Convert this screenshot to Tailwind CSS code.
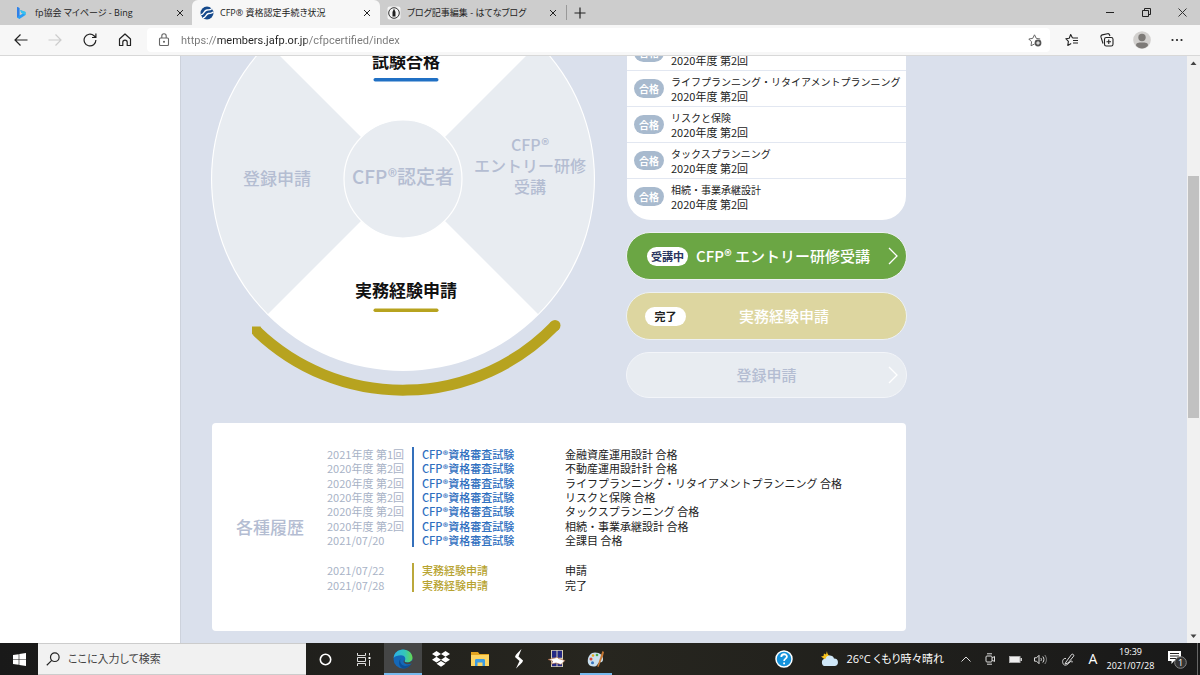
<!DOCTYPE html>
<html lang="ja">
<head>
    <meta charset="UTF-8">
    <meta name="viewport" content="width=device-width, initial-scale=1.0">
    <title>CFP® 資格認定手続き状況</title>
    <script src="https://cdn.jsdelivr.net/npm/@tailwindcss/browser@4"></script>
</head>
<body class="h-screen flex flex-col overflow-hidden bg-white text-[#222] font-['Noto_Sans_CJK_JP','Noto_Sans',sans-serif]">
    <!-- タブバー -->
    <header class="h-[25px] shrink-0 flex bg-[#cdcdcd] text-[9px] text-[#222] [font-feature-settings:'palt'] font-['Open_Sans','Noto_Sans_CJK_JP',sans-serif]">
        <div class="w-[192px] flex items-center pl-[15px] pr-2">
            <svg class="w-3 h-3 shrink-0" viewBox="0 0 12 12"><path d="M2 0l2.400 .9v7.600L8 6.500 6.300 5.700 5.200 3.100 10.500 5v2.900L4.400 12 2 10.600z" fill="#2a9df4"/><path d="M2 0l2.400 .9v7.600L2 10.600z" fill="#2f7fe8"/><path d="M5.200 3.100L10.500 5v2.900L6.300 5.700z" fill="#33c4ee"/></svg>
            <span class="ml-2 flex-1 whitespace-nowrap">fp協会 マイページ - Bing</span>
            <button aria-label="閉じる"><svg class="w-2 h-2" viewBox="0 0 8 8" stroke="#222"><path d="M1 1l6 6M7 1L1 7"/></svg></button>
        </div>
        <div class="w-[188px] flex items-center pl-2 pr-[9px] bg-[#f7f7f7] rounded-t-md">
            <svg class="w-[14px] h-[14px] shrink-0" viewBox="0 0 14 14"><circle cx="7" cy="7" r="6.500" fill="#164a8c"/><path d="M1 8.500C4 9 3.500 4.500 7 4c2-.3 3 .3 5-1.500M3 11.800c3 0 2.500-3.600 5.500-4.300 2-.5 3 .3 4.800-1.500" fill="none" stroke="#fff" stroke-width="1.300"/></svg>
            <span class="ml-[6px] flex-1 whitespace-nowrap">CFP® 資格認定手続き状況</span>
            <button aria-label="閉じる"><svg class="w-2 h-2" viewBox="0 0 8 8" stroke="#222"><path d="M1 1l6 6M7 1L1 7"/></svg></button>
        </div>
        <div class="w-[187px] my-[5px] flex items-center pl-[7px] pr-[9px] border-r border-[#999]">
            <svg class="w-[14px] h-[14px] shrink-0" viewBox="0 0 14 14"><rect x=".5" y=".5" width="13" height="13" rx="2" fill="#f5f5f5"/><circle cx="7" cy="7" r="5.300" fill="none" stroke="#333"/><path d="M7 2.500L8.500 6v4.500h-3V6z" fill="#222"/></svg>
            <span class="ml-[6px] flex-1 whitespace-nowrap">ブログ記事編集 - はてなブログ</span>
            <button aria-label="閉じる"><svg class="w-2 h-2" viewBox="0 0 8 8" stroke="#222"><path d="M1 1l6 6M7 1L1 7"/></svg></button>
        </div>
        <button class="w-[26px] flex items-center justify-center" aria-label="新しいタブ"><svg class="w-3 h-3" viewBox="0 0 12 12" stroke="#222" stroke-width="1.200"><path d="M6 .5v11M.5 6h11"/></svg></button>
        <div class="ml-auto flex">
            <button class="w-9 flex items-center justify-center" aria-label="最小化"><svg class="w-2 h-2" viewBox="0 0 8 8" stroke="#222"><path d="M0 3.500h8"/></svg></button>
            <button class="w-9 flex items-center justify-center" aria-label="元に戻す"><svg class="w-[9px] h-[9px]" viewBox="0 0 9 9" fill="none" stroke="#222"><path d="M.5 2.500h6v6h-6zM2.500 2.500v-2h6v6h-2"/></svg></button>
            <button class="w-9 flex items-center justify-center" aria-label="閉じる"><svg class="w-[9px] h-[9px]" viewBox="0 0 9 9" stroke="#333"><path d="M.5 .5l8 8M8.500 .5l-8 8"/></svg></button>
        </div>
    </header>

    <!-- ツールバー -->
    <nav class="h-[31px] shrink-0 flex items-center pl-1 pr-[6px] bg-[#f7f7f7] border-b border-[#d8d8d8]">
        <button class="w-[34px] flex justify-center" aria-label="戻る"><svg class="w-[14px] h-[14px]" viewBox="0 0 14 14" fill="none" stroke="#222" stroke-width="1.200"><path d="M13.500 7H1M6.500 1.500L1 7l5.500 5.500"/></svg></button>
        <button class="w-[34px] flex justify-center" aria-label="進む"><svg class="w-[14px] h-[14px]" viewBox="0 0 14 14" fill="none" stroke="#ccc" stroke-width="1.200"><path d="M.5 7H13M7.500 1.500L13 7l-5.500 5.500"/></svg></button>
        <button class="w-[35px] flex justify-center" aria-label="更新"><svg class="w-[14px] h-[14px]" viewBox="0 0 14 14" fill="none" stroke="#222" stroke-width="1.200"><path d="M12.900 7A5.900 5.900 0 1 1 11 2.700l1.700 1.600M12.900 .5v4H9"/></svg></button>
        <button class="w-[35px] flex justify-center" aria-label="ホーム"><svg class="w-[14px] h-[14px]" viewBox="0 0 14 14" fill="none" stroke="#222" stroke-width="1.200" stroke-linejoin="round"><path d="M1.500 6L7 1l5.500 5v6.500h-3.300V9.300a2.200 2.200 0 0 0-4.400 0v3.200H1.500z"/></svg></button>
        <div class="h-6 flex-1 ml-[5px] mr-1 flex items-center bg-white rounded pl-[11px] pr-2">
            <svg class="w-3 h-[14px] shrink-0" viewBox="0 0 12 14" fill="none" stroke="#666" stroke-width="1.100"><rect x="1.500" y="5" width="9" height="7.500" rx="1"/><path d="M3.800 5V3a2.200 2.200 0 0 1 4.400 0v2"/><circle cx="6" cy="8.700" r=".5" fill="#666"/></svg>
            <input type="text" aria-label="アドレスバー" value="https://members.jafp.or.jp/cfpcertified/index" class="ml-[11px] flex-1 h-5 text-[11px] outline-none text-transparent bg-clip-text bg-[linear-gradient(90deg,#777_36px,#222_36px,#222_125px,#777_125px)] font-[Roboto,sans-serif]">
            <button aria-label="お気に入りに追加"><svg class="w-[14px] h-[14px]" viewBox="0 0 14 14" fill="none" stroke="#666" stroke-linejoin="round"><path d="M6.500 11L3 12.800l.6-4L.8 6l3.900-.6L6.500 1.800l1.800 3.600 3.900.6"/><circle cx="10" cy="10" r="3.400" fill="#555" stroke="none"/><path d="M10 8.200v3.600M8.200 10h3.600" stroke="#fff"/></svg></button>
        </div>
        <button class="w-[35px] flex justify-center" aria-label="お気に入り"><svg class="w-[14px] h-[14px]" viewBox="0 0 14 14" fill="none" stroke="#222" stroke-width="1.100" stroke-linejoin="round"><path d="M7.500 5L5.700 1.500 4.200 5.200.8 5.700l2.600 2.700-.6 4 3.400-1.900M7.500 5H13M8 7.500h5M8 10h5"/></svg></button>
        <button class="w-[35px] flex justify-center" aria-label="コレクション"><svg class="w-[14px] h-[14px]" viewBox="0 0 14 14" fill="none" stroke="#222" stroke-width="1.100"><rect x="4.500" y="4.500" width="8.500" height="8.500" rx="1.800"/><path d="M8.750 6.500v4.500M6.500 8.750H11M3 10.500L1 4.200C.7 3 1.200 2.200 2.200 1.900L7.500 .7c1-.2 1.800.3 2.100 1.300l.3 1"/></svg></button>
        <button class="w-[35px] flex justify-center" aria-label="プロファイル"><svg class="w-[18px] h-[18px]" viewBox="0 0 18 18"><circle cx="9" cy="9" r="8.800" fill="#d2d0ce"/><circle cx="9" cy="6.500" r="3.700" fill="#7d7a77"/><path d="M3 14.500c0-3 2.500-3 6-3s6 0 6 3c-1.500 2-3.800 3-6 3s-4.500-1-6-3z" fill="#7d7a77"/></svg></button>
        <button class="w-[35px] flex justify-center" aria-label="設定など"><svg class="w-3 h-3" viewBox="0 0 12 12" fill="#222"><circle cx="1.500" cy="6" r="1.100"/><circle cx="6" cy="6" r="1.100"/><circle cx="10.500" cy="6" r="1.100"/></svg></button>
    </nav>

    <!-- ページ本体 -->
    <div class="flex-1 min-h-0 flex">
        <div class="w-[181px] shrink-0 bg-white border-r border-[#cdd2dc]"></div>
        <main class="flex-1 min-w-0 overflow-hidden bg-[#dae0ec] pl-[31px]">
            <div class="max-w-[694px] -mt-[21px]">
                <div class="flex justify-between items-start -mx-px">
                    <!-- 手続きの円グラフ -->
                    <svg class="w-[386px] h-[363px] shrink-0" viewBox="211 35 386 363" text-anchor="middle" font-weight="500">
                        <circle cx="403" cy="179" r="192" fill="#fff"/>
                        <path d="M403 179L268 44A191 191 0 0 0 268 314zM403 179L538 44A191 191 0 0 1 538 314z" fill="#e8ecf1"/>
                        <circle cx="403" cy="179" r="59" fill="#e8ecf1" stroke="#fff" stroke-width="1.200"/>
                        <path d="M257 331.500A211 211 0 0 0 555 325.500" fill="none" stroke="#b7a31f" stroke-width="11"/>
                        <path d="M252 326.500h8.500l2 4.500-6 6-4.500-3z" fill="#b7a31f"/>
                        <circle cx="555" cy="325.500" r="5.500" fill="#b7a31f"/>
                        <rect x="373.500" y="78" width="65" height="3.500" rx="1.700" fill="#2070c4"/>
                        <rect x="373.500" y="308.500" width="65" height="3.500" rx="1.700" fill="#b7a31f"/>
                        <text x="406" y="68" font-size="17" font-weight="700" fill="#111">試験合格</text>
                        <text x="406" y="297" font-size="17" font-weight="700" fill="#111">実務経験申請</text>
                        <g fill="#b4bdd2">
                            <text x="277" y="185" font-size="17">登録申請</text>
                            <text x="403" y="184" font-size="19">CFP®認定者</text>
                            <text font-size="16"><tspan x="530" y="151">CFP®</tspan><tspan x="530" y="172">エントリー研修</tspan><tspan x="530" y="193">受講</tspan></text>
                        </g>
                    </svg>

                    <!-- 合格科目と申請ボタン -->
                    <div class="w-[281px] shrink-0 flex flex-col gap-3">
                        <ul class="mx-px pb-[7px] bg-white rounded-b-[24px] divide-y divide-[#e2e7f1] text-[11px] leading-[14px]">
                            <li class="h-9 flex items-center pl-[7px] gap-[7px]"><span class="w-[30px] h-[19px] rounded-full bg-[#a8bace] text-white text-[10px] leading-[19px] font-bold text-center">合格</span><p><span class="text-[10px]">不動産運用設計</span><br>2020年度 第2回</p></li>
                            <li class="h-9 flex items-center pl-[7px] gap-[7px]"><span class="w-[30px] h-[19px] rounded-full bg-[#a8bace] text-white text-[10px] leading-[19px] font-bold text-center">合格</span><p><span class="text-[10px]">ライフプランニング・リタイアメントプランニング</span><br>2020年度 第2回</p></li>
                            <li class="h-9 flex items-center pl-[7px] gap-[7px]"><span class="w-[30px] h-[19px] rounded-full bg-[#a8bace] text-white text-[10px] leading-[19px] font-bold text-center">合格</span><p><span class="text-[10px]">リスクと保険</span><br>2020年度 第2回</p></li>
                            <li class="h-9 flex items-center pl-[7px] gap-[7px]"><span class="w-[30px] h-[19px] rounded-full bg-[#a8bace] text-white text-[10px] leading-[19px] font-bold text-center">合格</span><p><span class="text-[10px]">タックスプランニング</span><br>2020年度 第2回</p></li>
                            <li class="h-[34px] flex items-center pl-[7px] gap-[7px]"><span class="w-[30px] h-[19px] rounded-full bg-[#a8bace] text-white text-[10px] leading-[19px] font-bold text-center">合格</span><p><span class="text-[10px]">相続・事業承継設計</span><br>2020年度 第2回</p></li>
                        </ul>
                        <button class="h-12 flex items-center pl-5 pr-2 rounded-full border border-[#edf1f3] bg-[#6ba644] text-white text-[15px] font-medium">
                            <span class="w-[41px] h-[19px] rounded-full bg-white text-[#2a3560] text-[11px] leading-[19px] font-bold">受講中</span>
                            <span class="ml-2 flex-1 text-left whitespace-nowrap">CFP® エントリー研修受講</span>
                            <svg class="w-[10px] h-[18px]" viewBox="0 0 10 18" fill="none" stroke="#fff" stroke-width="1.300"><path d="M1 1l8 8-8 8"/></svg>
                        </button>
                        <button class="h-12 flex items-center pl-[18px] pr-6 rounded-full border border-[#edf1f3] bg-[#ddd6a0] text-white text-[15px] font-medium">
                            <span class="w-[41px] h-[19px] rounded-full bg-white text-[#222] text-[11px] leading-[19px] font-bold">完了</span>
                            <span class="flex-1">実務経験申請</span>
                        </button>
                        <button class="h-[46px] flex items-center pr-2 rounded-full border border-[#f3f5f9] bg-[#e8ecf1] text-[#b4bdd2] text-[15px] font-medium">
                            <span class="flex-1 pl-[18px]">登録申請</span>
                            <svg class="w-[10px] h-[18px]" viewBox="0 0 10 18" fill="none" stroke="#fff" stroke-width="1.300"><path d="M1 1l8 8-8 8"/></svg>
                        </button>
                    </div>
                </div>

                <!-- 各種履歴 -->
                <section class="mt-[25px] flex items-center bg-white rounded pl-6 pt-6 pb-[39px] text-[11px] leading-[14px]">
                    <h2 class="w-[91px] pt-[14px] text-[17px] leading-6 font-medium text-[#b4bdd2]">各種履歴</h2>
                    <div class="flex-1 flex flex-col gap-4">
                        <table class="h-[100px] w-full table-fixed">
                            <tbody>
                                <tr><td class="w-[86px] text-[#a8b2c6]">2021年度 第1回</td><td class="w-[152px] border-l-2 border-[#3470bb] pl-2 font-medium text-[#2f70c0]">CFP®資格審査試験</td><td>金融資産運用設計 合格</td></tr>
                                <tr><td class="text-[#a8b2c6]">2020年度 第2回</td><td class="border-l-2 border-[#3470bb] pl-2 font-medium text-[#2f70c0]">CFP®資格審査試験</td><td>不動産運用設計計 合格</td></tr>
                                <tr><td class="text-[#a8b2c6]">2020年度 第2回</td><td class="border-l-2 border-[#3470bb] pl-2 font-medium text-[#2f70c0]">CFP®資格審査試験</td><td>ライフプランニング・リタイアメントプランニング 合格</td></tr>
                                <tr><td class="text-[#a8b2c6]">2020年度 第2回</td><td class="border-l-2 border-[#3470bb] pl-2 font-medium text-[#2f70c0]">CFP®資格審査試験</td><td>リスクと保険 合格</td></tr>
                                <tr><td class="text-[#a8b2c6]">2020年度 第2回</td><td class="border-l-2 border-[#3470bb] pl-2 font-medium text-[#2f70c0]">CFP®資格審査試験</td><td>タックスプランニング 合格</td></tr>
                                <tr><td class="text-[#a8b2c6]">2020年度 第2回</td><td class="border-l-2 border-[#3470bb] pl-2 font-medium text-[#2f70c0]">CFP®資格審査試験</td><td>相続・事業承継設計 合格</td></tr>
                                <tr><td class="text-[#a8b2c6]">2021/07/20</td><td class="border-l-2 border-[#3470bb] pl-2 font-medium text-[#2f70c0]">CFP®資格審査試験</td><td>全課目 合格</td></tr>
                            </tbody>
                        </table>
                        <table class="h-[29px] w-full table-fixed">
                            <tbody>
                                <tr><td class="w-[86px] text-[#a8b2c6]">2021/07/22</td><td class="w-[152px] border-l-2 border-[#bba83b] pl-2 font-medium text-[#b7a32f]">実務経験申請</td><td>申請</td></tr>
                                <tr><td class="text-[#a8b2c6]">2021/07/28</td><td class="border-l-2 border-[#bba83b] pl-2 font-medium text-[#b7a32f]">実務経験申請</td><td>完了</td></tr>
                            </tbody>
                        </table>
                    </div>
                </section>
            </div>
        </main>
        <!-- スクロールバー -->
        <div class="w-[13px] shrink-0 flex flex-col items-center bg-[#f1f1f1]">
            <svg class="w-[13px] h-[14px]" viewBox="0 0 13 14"><path d="M3.500 9h6l-3-3.500z" fill="#444"/></svg>
            <div class="h-[106px]"></div>
            <div class="w-[11px] h-[242px] bg-[#c1c1c1]"></div>
            <svg class="w-[13px] h-[14px] mt-auto" viewBox="0 0 13 14"><path d="M3.500 5.500h6l-3 3.500z" fill="#444"/></svg>
        </div>
    </div>

    <!-- タスクバー -->
    <footer class="h-8 shrink-0 flex bg-linear-to-r from-[#191919] via-[#27261f] to-[#191919] text-white [font-feature-settings:'palt'] font-['Open_Sans','Noto_Sans_CJK_JP',sans-serif]">
        <button class="w-[38px] flex items-center justify-center" aria-label="スタート"><svg class="w-[13px] h-[13px]" viewBox="0 0 13 13" fill="#fff"><path d="M0 2l5.700-.8v5H0zM6.300 1.100L13 0v6.200H6.300zM0 6.800h5.700v5L0 11zM6.300 6.800H13V13l-6.700-1z"/></svg></button>
        <label class="w-[268px] flex items-center gap-2 pl-2 bg-[#f1f1f1] border-y border-[#ccc]">
            <svg class="w-[14px] h-[14px]" viewBox="0 0 14 14" fill="none" stroke="#222" stroke-width="1.200"><circle cx="8.800" cy="5.200" r="4.300"/><path d="M5.800 8.400L.8 13.200"/></svg>
            <input type="text" aria-label="検索" placeholder="ここに入力して検索" class="flex-1 min-w-0 text-[11px] [font-feature-settings:'palt'] outline-none placeholder:text-[#444]">
        </label>
        <button class="w-[38px] flex items-center justify-center" aria-label="Cortana"><svg class="w-[13px] h-[13px]" viewBox="0 0 13 13" fill="none" stroke="#fff" stroke-width="1.600"><circle cx="6.500" cy="6.500" r="5.200"/></svg></button>
        <button class="w-10 flex items-center justify-center" aria-label="タスクビュー"><svg class="w-[14px] h-[13px]" viewBox="0 0 14 13" fill="none" stroke="#ddd"><path d="M.5 0v2.500h8V0M.5 13v-2.500h8V13M.5 4.500h8v4h-8zM12.500 0v2.500M12.500 7v6"/><path d="M11.500 4h2v2h-2z" fill="#fff" stroke="none"/></svg></button>
        <button class="w-[38px] flex items-center justify-center bg-[#454646] border-b-2 border-[#76b9ed] pt-[2px]" aria-label="Microsoft Edge">
            <svg class="w-5 h-5" viewBox="0 0 20 20"><defs><linearGradient id="eg" x1="0" x2="1"><stop offset="0" stop-color="#2cb1e8"/><stop offset=".6" stop-color="#35c6b8"/><stop offset="1" stop-color="#65d84e"/></linearGradient></defs><circle cx="10" cy="10" r="9.500" fill="#1468b8"/><path d="M.6 9C1 4 5 .5 10 .5c5.500 0 9.500 4 9.500 8.300 0 3-2.500 4.700-5.300 4.700-2 0-3-.8-2.500-1.700 1.500-2 .3-5.600-3.700-5.600-3 0-6.500 1-7.400 2.800z" fill="url(#eg)"/><path d="M7.500 10c-1.500 4 2 7.500 6 6.800 2-.3 3.500-1 4.600-2.100-1.200 2.600-4.500 4.800-8.100 4.800-3.500-1.500-5.500-6-2.500-9.500z" fill="#0c4f94"/><path d="M11.700 11.800c-.5.900.5 1.700 2.500 1.700 1.800 0 3.400-.7 4.400-1.800l.8 1-.9 1.800c-2.500 1.300-6.700 1-7.700-1-.5-1.200 0-2.300.3-2.800z" fill="#454646"/></svg>
        </button>
        <button class="w-[38px] flex items-center justify-center" aria-label="Dropbox"><svg class="w-[18px] h-4" viewBox="0 0 18 16" fill="#fff"><path d="M4.500 0L9 2.900 4.500 5.800 0 2.900zM13.500 0L18 2.900l-4.500 2.900L9 2.900zM4.500 5.800L9 8.700l-4.500 2.900L0 8.700zM13.500 5.800L18 8.700l-4.500 2.900L9 8.700zM9 9.900l4.500 2.900L9 15.700l-4.500-2.900z"/></svg></button>
        <button class="w-10 flex items-center justify-center" aria-label="エクスプローラー"><svg class="w-[18px] h-4" viewBox="0 0 18 16"><path d="M0 1h7l1.500 2H18v3H0z" fill="#e2a31f"/><path d="M0 4h18v11H0z" fill="#fcd462"/><path d="M4 15V9.500C4 8.500 4.500 8 5.500 8h7c1 0 1.500.5 1.500 1.500V15h-2.500v-3.500h-5V15z" fill="#3d9be0"/></svg></button>
        <button class="w-[38px] flex items-center justify-center" aria-label="アプリ"><svg class="w-[10px] h-[20px]" viewBox="0 0 10 20" fill="#fff"><path d="M7.500 0C4.500 3 1.500 5.500 1 8l4.500 4L2 19.500C5 16.500 8.500 14 9 11.500L4.500 7.500z"/></svg></button>
        <button class="w-[38px] flex items-center justify-center" aria-label="辞書"><svg class="w-[18px] h-[18px]" viewBox="0 0 18 18"><path d="M3 0h12v17H3z" fill="#d8cfb4"/><path d="M4 .8h4.500v7H4zM9.500 .8H14v7H9.500zM4 11h4.500v5.200H4zM9.500 11H14v5.200H9.500z" fill="#252a86"/><path d="M0 9.500l7-1.500 2-1 1.500 1.500 6.500 2-4 4-5-1.500L3.500 14l1-3z" fill="#fff" stroke="#a55c35" stroke-width=".6"/></svg></button>
        <button class="w-8 ml-1 flex items-center justify-center border-b-2 border-[#76b9ed] pt-[2px]" aria-label="ペイント"><svg class="w-[18px] h-[18px]" viewBox="0 0 18 18"><path d="M8 2.500c5 0 8.500 3 8 7.200-.4 3.500-3 2-4.500 3.300-1.500 1.500-1 3.500-5 3.500S.5 14 .8 10.300C1 6 4 2.500 8 2.500z" fill="#c9e0ee"/><circle cx="4" cy="9" r="1.500" fill="#d84938"/><circle cx="6" cy="5.500" r="1.300" fill="#e8a820"/><circle cx="10" cy="5" r="1.300" fill="#4daa4c"/><circle cx="5.500" cy="12.700" r="1.500" fill="#3573bf"/><path d="M14 5l1.500-4L17 2l-1 4-4.500 11-1.200-.5z" fill="#c77935"/></svg></button>

        <div class="ml-auto flex items-center">
            <button class="mr-[28px]" aria-label="ヘルプ"><svg class="w-[18px] h-[18px]" viewBox="0 0 18 18"><circle cx="9" cy="9" r="8" fill="#1592db" stroke="#fff" stroke-width="1.500"/><path d="M6.300 7c0-3.700 5.600-3.500 5.600-.3 0 2-2.800 1.900-2.800 4.300M9.100 12.500v1.800" fill="none" stroke="#fff" stroke-width="1.800"/></svg></button>
            <button class="flex items-center gap-[7px] text-[11px] whitespace-nowrap">
                <svg class="w-[18px] h-4" viewBox="0 0 18 16"><path d="M6 0c0 3 2 5.500 5.500 5.500C10 9 5 10 2 7L0 5.500l2.500-.5L3 2.500l2 1z" fill="#f8c21c"/><path d="M4.500 15a3.600 3.600 0 0 1 0-7.200A4.500 4.500 0 0 1 13 7.500a3.800 3.800 0 0 1 1 7.500z" fill="#cfe7f8"/></svg>
                <span>26°C くもり時々晴れ</span>
            </button>
            <div class="ml-[9px] flex items-center">
                <button class="w-[25px] flex justify-center" aria-label="隠れているインジケーター"><svg class="w-[10px] h-[6px]" viewBox="0 0 10 6" fill="none" stroke="#ddd"><path d="M.5 5.500L5 1l4.500 4.500"/></svg></button>
                <button class="w-[25px] flex justify-center" aria-label="今すぐ会議"><svg class="w-[11px] h-3" viewBox="0 0 11 12" fill="none" stroke="#ddd"><rect x="1" y="3" width="6" height="6" rx="1"/><path d="M7 5l2.500-1.500v5L7 7M2 .8h5M2 11.200h5"/></svg></button>
                <button class="w-[25px] flex justify-center" aria-label="バッテリー"><svg class="w-[13px] h-[7px]" viewBox="0 0 13 7"><rect x=".5" y=".5" width="10.500" height="6" fill="#eee" stroke="#aaa"/><path d="M11.500 2H13v3h-1.500z" fill="#ccc"/></svg></button>
                <button class="w-[25px] flex justify-center" aria-label="音量"><svg class="w-[13px] h-[11px]" viewBox="0 0 13 11" fill="none" stroke="#ddd"><path d="M.5 3.800h2l2.500-2.500v8.400L2.500 7.200h-2zM6.800 4c.8 1 .8 2 0 3M8.800 2.500c1.500 2 1.500 4 0 6"/><path d="M10.800 1c2.200 3 2.200 6 0 9" stroke="#888"/></svg></button>
                <button class="w-[31px] flex justify-center" aria-label="ペン"><svg class="w-[13px] h-[13px]" viewBox="0 0 13 13" fill="none" stroke="#ddd"><path d="M4 9l5.500-7.500c1-1 3 .3 2.200 1.600L6 10l-3 1zM4 5.500C1 5 0 8 1 10.500s4 2 6-.5 4-2.500 3-.5"/></svg></button>
                <button class="w-[18px] text-[14px] leading-5" aria-label="入力モード">A</button>
            </div>
            <time class="w-[57px] text-center text-[9px] leading-[14px]">19:39<br>2021/07/28</time>
            <button class="ml-[9px] mr-[10px]" aria-label="通知">
                <svg class="w-[19px] h-[19px]" viewBox="0 0 19 19"><path d="M0 1h13v10H6l-2.500 3v-3H0z" fill="#fff"/><path d="M2 3.500h9M2 6h9M2 8.500h6" stroke="#222"/><circle cx="12.500" cy="12.500" r="5.800" fill="#333" stroke="#888"/><text x="12.500" y="15.500" font-size="9" fill="#fff" text-anchor="middle">1</text></svg>
            </button>
            <div class="h-8 w-[3px] border-l border-[#666]"></div>
        </div>
    </footer>
</body>
</html>
